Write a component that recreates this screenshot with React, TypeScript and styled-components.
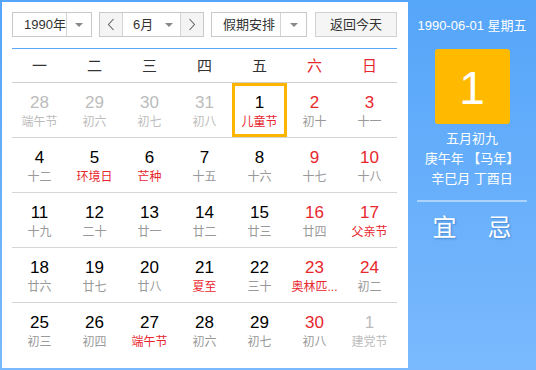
import React from "react"
import styled, { createGlobalStyle } from "styled-components"

const GlobalStyle = createGlobalStyle`
  body {
    margin: 0;
    font-family: "Liberation Sans", "Noto Sans CJK SC", sans-serif;
  }
`

type Tone = "normal" | "weekend" | "other"

interface Day {
  n: number
  sub: string
  tone: Tone
  fest?: boolean
  selected?: boolean
}

const weeks: Day[][] = [
  [
    { n: 28, sub: "端午节", tone: "other" },
    { n: 29, sub: "初六", tone: "other" },
    { n: 30, sub: "初七", tone: "other" },
    { n: 31, sub: "初八", tone: "other" },
    { n: 1, sub: "儿童节", tone: "normal", fest: true, selected: true },
    { n: 2, sub: "初十", tone: "weekend" },
    { n: 3, sub: "十一", tone: "weekend" },
  ],
  [
    { n: 4, sub: "十二", tone: "normal" },
    { n: 5, sub: "环境日", tone: "normal", fest: true },
    { n: 6, sub: "芒种", tone: "normal", fest: true },
    { n: 7, sub: "十五", tone: "normal" },
    { n: 8, sub: "十六", tone: "normal" },
    { n: 9, sub: "十七", tone: "weekend" },
    { n: 10, sub: "十八", tone: "weekend" },
  ],
  [
    { n: 11, sub: "十九", tone: "normal" },
    { n: 12, sub: "二十", tone: "normal" },
    { n: 13, sub: "廿一", tone: "normal" },
    { n: 14, sub: "廿二", tone: "normal" },
    { n: 15, sub: "廿三", tone: "normal" },
    { n: 16, sub: "廿四", tone: "weekend" },
    { n: 17, sub: "父亲节", tone: "weekend", fest: true },
  ],
  [
    { n: 18, sub: "廿六", tone: "normal" },
    { n: 19, sub: "廿七", tone: "normal" },
    { n: 20, sub: "廿八", tone: "normal" },
    { n: 21, sub: "夏至", tone: "normal", fest: true },
    { n: 22, sub: "三十", tone: "normal" },
    { n: 23, sub: "奥林匹...", tone: "weekend", fest: true },
    { n: 24, sub: "初二", tone: "weekend" },
  ],
  [
    { n: 25, sub: "初三", tone: "normal" },
    { n: 26, sub: "初四", tone: "normal" },
    { n: 27, sub: "端午节", tone: "normal", fest: true },
    { n: 28, sub: "初六", tone: "normal" },
    { n: 29, sub: "初七", tone: "normal" },
    { n: 30, sub: "初八", tone: "weekend" },
    { n: 1, sub: "建党节", tone: "other" },
  ],
]

const weekdays = ["一", "二", "三", "四", "五", "六", "日"]

const RED = "#e8262d"
const GREY = "#bcbcbc"

const Widget = styled.div`
  width: 536px;
  height: 370px;
  box-sizing: border-box;
  padding: 2px 0 2px 2px;
  display: flex;
  background: linear-gradient(#55a5f9, #7ab9fd);
`

const Main = styled.div`
  width: 406px;
  box-sizing: border-box;
  padding: 10px 11px 0 10px;
  background: #fff;
`

const Toolbar = styled.div`
  display: flex;
  height: 25px;
  gap: 7px;
  margin-bottom: 11px;
  font-size: 13px;
  color: #333;
`

const Select = styled.div<{ $width: number }>`
  width: ${p => p.$width}px;
  box-sizing: border-box;
  display: flex;
  border: 1px solid #c9c9c9;
  background: #fff;
`

const SelectLabel = styled.div<{ $pad?: number }>`
  flex: 1;
  padding-left: ${p => p.$pad ?? 11}px;
  line-height: 23px;
`

const Caret = styled.div<{ $divided?: boolean; $width?: number }>`
  width: ${p => p.$width ?? 24}px;
  display: flex;
  align-items: center;
  justify-content: center;
  border-left: ${p => (p.$divided ? "1px solid #d4d4d4" : "none")};
  &::after {
    content: "";
    border-left: 4px solid transparent;
    border-right: 4px solid transparent;
    border-top: 4px solid #888;
  }
`

const NavButton = styled.div<{ $side: "left" | "right" }>`
  width: 22px;
  display: flex;
  align-items: center;
  justify-content: center;
  background: #f4f4f4;
  border-${p => (p.$side === "left" ? "right" : "left")}: 1px solid #d4d4d4;
`

const ReturnButton = styled.div`
  width: 82px;
  margin-left: 1px;
  box-sizing: border-box;
  border: 1px solid #d0d0d0;
  background: #f5f5f5;
  text-align: center;
  line-height: 23px;
`

const Grid = styled.div`
  border-top: 1px solid #5aa7f8;
`

const HeadRow = styled.div`
  display: grid;
  grid-template-columns: repeat(7, 55px);
  height: 33px;
  border-bottom: 1px solid #cfcfcf;
`

const HeadCell = styled.div<{ $weekend: boolean }>`
  text-align: center;
  line-height: 33px;
  font-size: 15px;
  color: ${p => (p.$weekend ? RED : "#333")};
`

const WeekRow = styled.div`
  display: grid;
  grid-template-columns: repeat(7, 55px);
  height: 55px;
  box-sizing: border-box;
  border-bottom: 1px solid #d6d6d6;
  &:last-child {
    border-bottom: none;
  }
`

const Cell = styled.div<{ $selected?: boolean }>`
  display: flex;
  flex-direction: column;
  align-items: center;
  padding-top: 10px;
  box-shadow: ${p => (p.$selected ? "inset 0 0 0 3px #fdb500" : "none")};
`

const DayNum = styled.div<{ $tone: Tone }>`
  font-size: 17px;
  line-height: 20px;
  color: ${p => (p.$tone === "other" ? GREY : p.$tone === "weekend" ? RED : "#000")};
`

const DaySub = styled.div<{ $tone: Tone; $fest?: boolean }>`
  font-size: 12px;
  line-height: 16px;
  margin-top: 1px;
  white-space: nowrap;
  color: ${p => (p.$tone === "other" ? GREY : p.$fest ? RED : "#999")};
`

const Side = styled.div`
  flex: 1;
  display: flex;
  flex-direction: column;
  align-items: center;
  color: #fff;
  font-size: 13px;
`

const DateLine = styled.div`
  margin-top: 15px;
  line-height: 18px;
`

const BigDay = styled.div`
  margin-top: 14px;
  width: 75px;
  height: 75px;
  box-sizing: border-box;
  padding-top: 3px;
  border-radius: 3px;
  background: #ffba00;
  text-align: center;
  font-size: 46px;
  line-height: 72px;
`

const Lunar = styled.div`
  margin-top: 5px;
  text-align: center;
  line-height: 20px;
`

const Divider = styled.div`
  margin-top: 11px;
  width: 110px;
  height: 2px;
  background: rgba(255, 255, 255, 0.45);
`

const YiJi = styled.div`
  margin-top: 11px;
  display: flex;
  gap: 31px;
  font-size: 24px;
  line-height: 30px;
  text-shadow: 1px 1px 2px rgba(0, 60, 120, 0.35);
`

const Chevron = ({ dir }: { dir: "left" | "right" }) => (
  <svg width="8" height="13" viewBox="0 0 8 13">
    <polyline
      points={dir === "left" ? "6.5,1 1.5,6.5 6.5,12" : "1.5,1 6.5,6.5 1.5,12"}
      fill="none"
      stroke="#666"
      strokeWidth="1.1"
    />
  </svg>
)

const App = () => {
  return (
    <>
      <GlobalStyle />
      <Widget>
        <Main>
          <Toolbar>
            <Select $width={80}>
              <SelectLabel>1990年</SelectLabel>
              <Caret $divided />
            </Select>
            <Select $width={105}>
              <NavButton $side="left">
                <Chevron dir="left" />
              </NavButton>
              <SelectLabel $pad={10}>6月</SelectLabel>
              <Caret $width={22} />
              <NavButton $side="right">
                <Chevron dir="right" />
              </NavButton>
            </Select>
            <Select $width={96}>
              <SelectLabel>假期安排</SelectLabel>
              <Caret $divided $width={25} />
            </Select>
            <ReturnButton>返回今天</ReturnButton>
          </Toolbar>
          <Grid>
            <HeadRow>
              {weekdays.map((w, i) => (
                <HeadCell key={w} $weekend={i >= 5}>
                  {w}
                </HeadCell>
              ))}
            </HeadRow>
            {weeks.map((week, wi) => (
              <WeekRow key={wi}>
                {week.map((d, di) => (
                  <Cell key={di} $selected={d.selected}>
                    <DayNum $tone={d.tone}>{d.n}</DayNum>
                    <DaySub $tone={d.tone} $fest={d.fest}>
                      {d.sub}
                    </DaySub>
                  </Cell>
                ))}
              </WeekRow>
            ))}
          </Grid>
        </Main>
        <Side>
          <DateLine>1990-06-01 星期五</DateLine>
          <BigDay>1</BigDay>
          <Lunar>
            五月初九
            <br />
            庚午年 【马年】
            <br />
            辛巳月 丁酉日
          </Lunar>
          <Divider />
          <YiJi>
            <span>宜</span>
            <span>忌</span>
          </YiJi>
        </Side>
      </Widget>
    </>
  )
}

export default App
